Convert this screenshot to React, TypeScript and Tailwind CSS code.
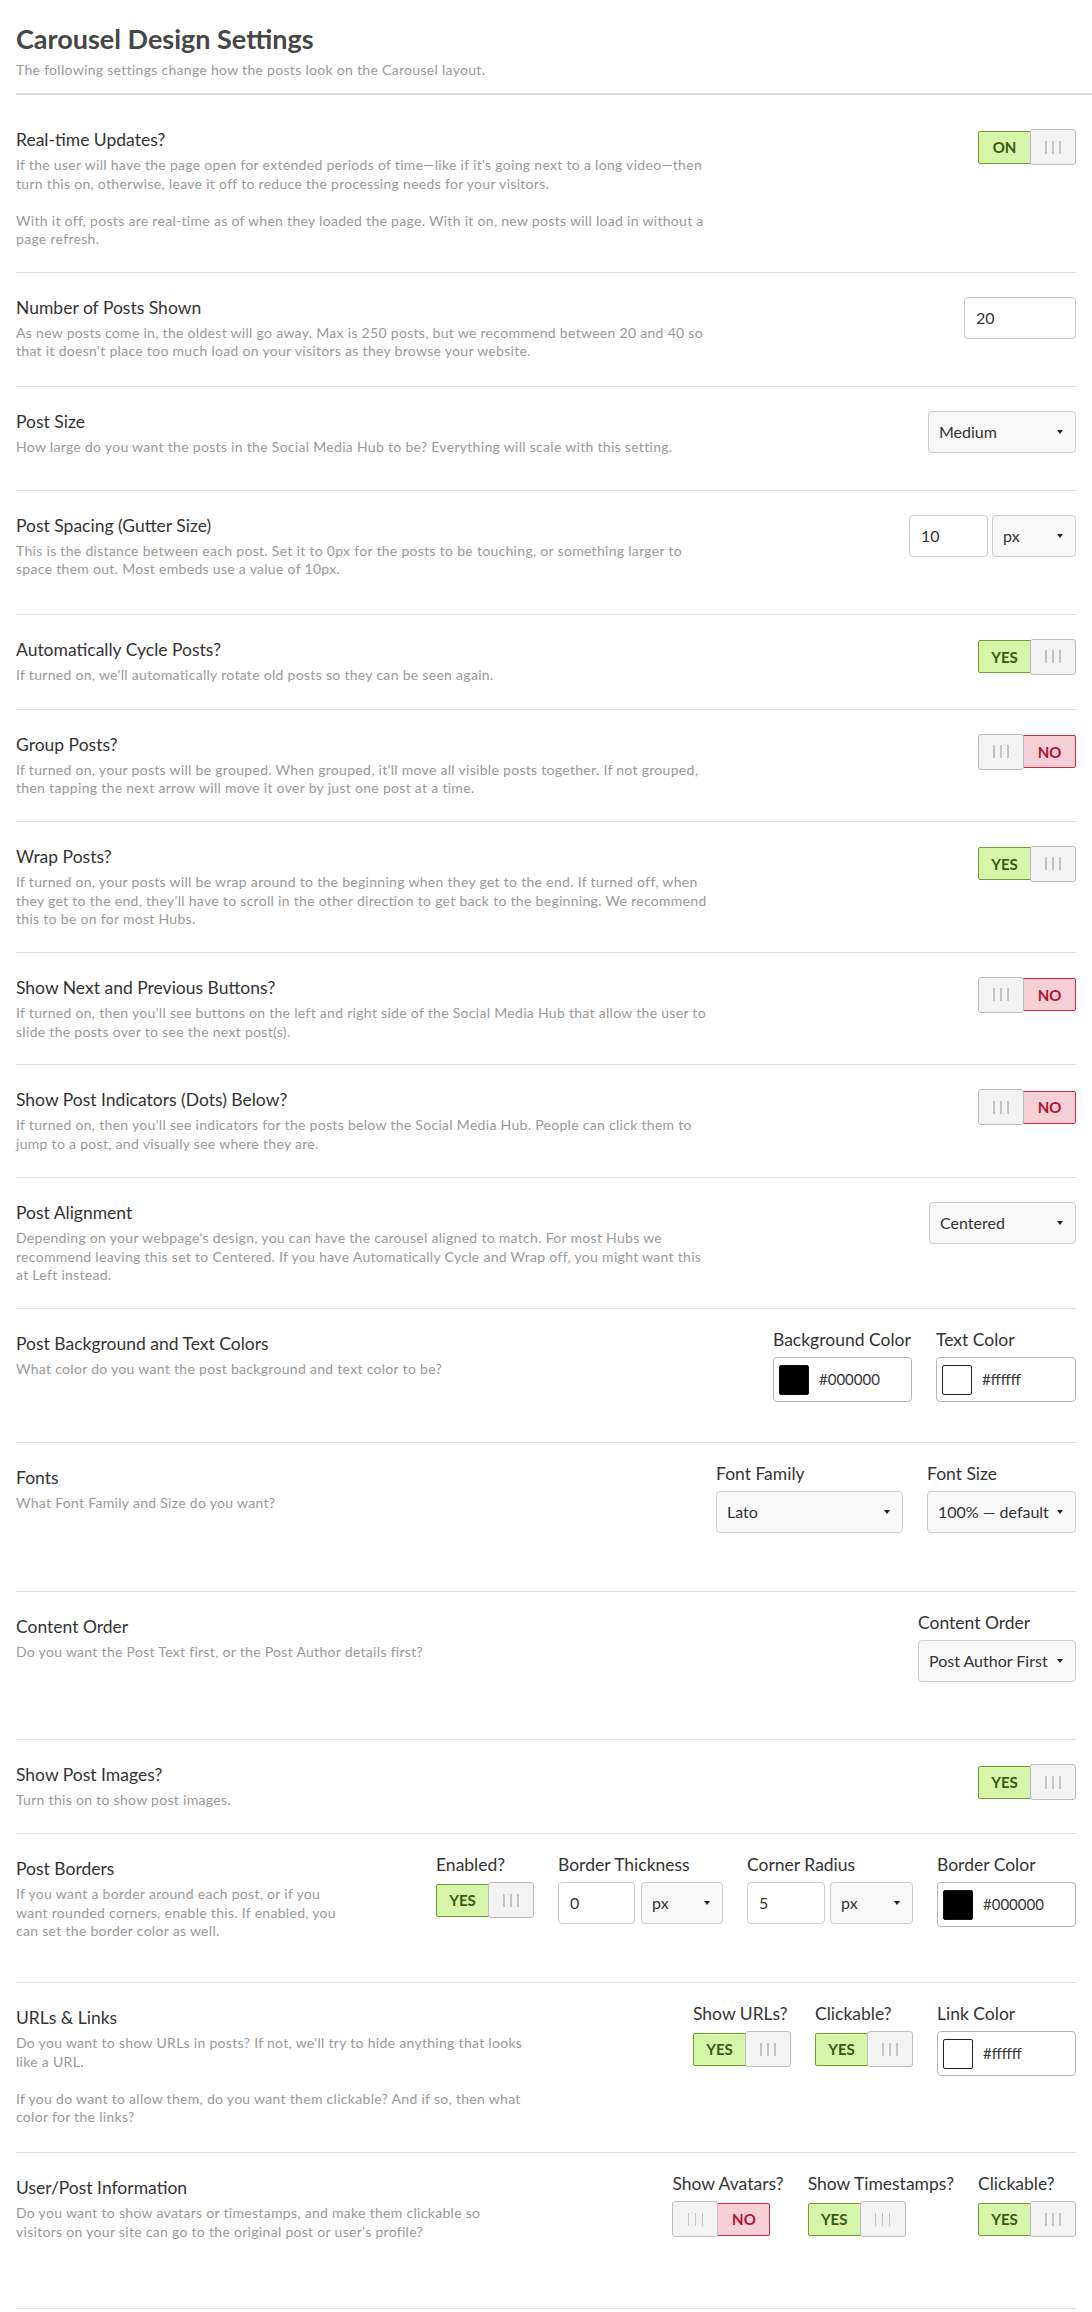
import React from "react";

function Handle() {
  return (
    <div className="relative z-10 flex h-[36px] w-[46px] items-center justify-center gap-[5.5px] rounded-[3px] border border-[#bdbdbd] bg-[#f3f3f3]">
      <span className="h-[13px] w-[1.5px] bg-[#c4c4c4]" />
      <span className="h-[13px] w-[1.5px] bg-[#c4c4c4]" />
      <span className="h-[13px] w-[1.5px] bg-[#c4c4c4]" />
    </div>
  );
}

function Toggle({ on, text }: { on: boolean; text: string }) {
  if (on) {
    return (
      <div className="flex w-[98px] items-center">
        <div className="flex h-[33px] w-[53px] items-center justify-center rounded-l-[2px] border border-[#6c9f2c] bg-[#d6f5a9] text-[15px] font-bold text-[#3a5912]">
          {text}
        </div>
        <div className="-ml-px">
          <Handle />
        </div>
      </div>
    );
  }
  return (
    <div className="flex w-[98px] items-center">
      <Handle />
      <div className="-ml-px flex h-[33px] w-[53px] items-center justify-center rounded-r-[2px] border border-[#d9253f] bg-[#f6d0d6] text-[15px] font-bold text-[#b3112f]">
        {text}
      </div>
    </div>
  );
}

function Caret() {
  return <span className="h-0 w-0 border-x-[3.5px] border-t-[4px] border-x-transparent border-t-[#222]" />;
}

function Select({ value, w }: { value: string; w: string }) {
  return (
    <div
      className={`${w} flex h-[42px] items-center justify-between rounded-[4px] border border-[#cccccc] bg-[#f8f8f8] pl-[10px] pr-[12px] text-[16px] text-[#333]`}
    >
      <span className="whitespace-nowrap">{value}</span>
      <Caret />
    </div>
  );
}

function TextInput({ value, w }: { value: string; w: string }) {
  return (
    <div
      className={`${w} flex h-[42px] items-center rounded-[4px] border border-[#cccccc] bg-white pl-[11px] text-[16px] text-[#333]`}
    >
      {value}
    </div>
  );
}

function ColorBox({ dark, value, w }: { dark: boolean; value: string; w: string }) {
  return (
    <div className={`${w} flex h-[45px] items-center gap-[10px] rounded-[4px] border border-[#b5b5b5] bg-white pl-[5px]`}>
      <span
        className={
          dark
            ? "h-[30px] w-[30px] rounded-[2px] border border-[#111] bg-black"
            : "h-[30px] w-[30px] rounded-[2px] border border-[#222] bg-white"
        }
      />
      <span className="text-[15px] text-[#333]">{value}</span>
    </div>
  );
}

function Field({ label, children }: { label: string; children: React.ReactNode }) {
  return (
    <div className="flex flex-col items-start">
      <div className="whitespace-nowrap text-[17.5px] leading-[22px] text-[#333]">{label}</div>
      <div className="mt-[6px]">{children}</div>
    </div>
  );
}

function Row({
  title,
  lines,
  right,
  pt = "pt-[24px]",
  minH = "",
  labeled = false,
}: {
  title: string;
  lines: string[];
  right: React.ReactNode;
  pt?: string;
  minH?: string;
  labeled?: boolean;
}) {
  return (
    <div className={`flex items-start border-b border-[#dddddd] pb-[23px] ${pt} ${minH}`}>
      <div className="min-w-0 flex-1">
        <div className="text-[17.5px] leading-[22px] text-[#333]">{title}</div>
        <div className="mt-[5px] whitespace-nowrap text-[14px] leading-[18.57px] tracking-[0.3px] text-[#999]">
          {lines.map((l, i) => (
            <div key={i}>{l === "" ? "\u00a0" : l}</div>
          ))}
        </div>
      </div>
      <div className={labeled ? "-mt-[4px] ml-auto flex items-start gap-[24px]" : "ml-auto flex items-start gap-[24px]"}>
        {right}
      </div>
    </div>
  );
}

export default function App() {
  return (
    <div className="min-h-screen bg-white pl-[16px] font-[Lato,sans-serif]">
      <div className="pt-[23px]">
        <h1 className="text-[27px] font-bold leading-[32px] text-[#464646]">Carousel Design Settings</h1>
        <p className="mt-[5px] text-[14px] leading-[20px] tracking-[0.3px] text-[#999]">
          The following settings change how the posts look on the Carousel layout.
        </p>
      </div>
      <div className="mt-[13px] h-[2px] bg-[#dddddd]" />
      <div className="pr-[16px]">
        <Row
          pt="pt-[34px]"
          title="Real-time Updates?"
          lines={[
            "If the user will have the page open for extended periods of time\u2014like if it's going next to a long video\u2014then",
            "turn this on, otherwise, leave it off to reduce the processing needs for your visitors.",
            "",
            "With it off, posts are real-time as of when they loaded the page. With it on, new posts will load in without a",
            "page refresh.",
          ]}
          right={<Toggle on text="ON" />}
        />
        <Row
          minH="min-h-[114px]"
          title="Number of Posts Shown"
          lines={[
            "As new posts come in, the oldest will go away. Max is 250 posts, but we recommend between 20 and 40 so",
            "that it doesn't place too much load on your visitors as they browse your website.",
          ]}
          right={<TextInput value="20" w="w-[112px]" />}
        />
        <Row
          minH="min-h-[104px]"
          title="Post Size"
          lines={["How large do you want the posts in the Social Media Hub to be? Everything will scale with this setting."]}
          right={<Select value="Medium" w="w-[148px]" />}
        />
        <Row
          minH="min-h-[124px]"
          title="Post Spacing (Gutter Size)"
          lines={[
            "This is the distance between each post. Set it to 0px for the posts to be touching, or something larger to",
            "space them out. Most embeds use a value of 10px.",
          ]}
          right={
            <div className="flex gap-[4px]">
              <TextInput value="10" w="w-[79px]" />
              <Select value="px" w="w-[84px]" />
            </div>
          }
        />
        <Row
          minH="min-h-[95px]"
          title="Automatically Cycle Posts?"
          lines={["If turned on, we'll automatically rotate old posts so they can be seen again."]}
          right={<Toggle on text="YES" />}
        />
        <Row
          minH="min-h-[112px]"
          title="Group Posts?"
          lines={[
            "If turned on, your posts will be grouped. When grouped, it'll move all visible posts together. If not grouped,",
            "then tapping the next arrow will move it over by just one post at a time.",
          ]}
          right={<Toggle on={false} text="NO" />}
        />
        <Row
          minH="min-h-[131px]"
          title="Wrap Posts?"
          lines={[
            "If turned on, your posts will be wrap around to the beginning when they get to the end. If turned off, when",
            "they get to the end, they'll have to scroll in the other direction to get back to the beginning. We recommend",
            "this to be on for most Hubs.",
          ]}
          right={<Toggle on text="YES" />}
        />
        <Row
          minH="min-h-[112px]"
          title="Show Next and Previous Buttons?"
          lines={[
            "If turned on, then you'll see buttons on the left and right side of the Social Media Hub that allow the user to",
            "slide the posts over to see the next post(s).",
          ]}
          right={<Toggle on={false} text="NO" />}
        />
        <Row
          minH="min-h-[113px]"
          title="Show Post Indicators (Dots) Below?"
          lines={[
            "If turned on, then you'll see indicators for the posts below the Social Media Hub. People can click them to",
            "jump to a post, and visually see where they are.",
          ]}
          right={<Toggle on={false} text="NO" />}
        />
        <Row
          minH="min-h-[131px]"
          title="Post Alignment"
          lines={[
            "Depending on your webpage's design, you can have the carousel aligned to match. For most Hubs we",
            "recommend leaving this set to Centered. If you have Automatically Cycle and Wrap off, you might want this",
            "at Left instead.",
          ]}
          right={<Select value="Centered" w="w-[147px]" />}
        />
        <Row
          minH="min-h-[134px]"
          labeled
          title="Post Background and Text Colors"
          lines={["What color do you want the post background and text color to be?"]}
          right={
            <>
              <Field label="Background Color">
                <ColorBox dark value="#000000" w="w-[139px]" />
              </Field>
              <Field label="Text Color">
                <ColorBox dark={false} value="#ffffff" w="w-[140px]" />
              </Field>
            </>
          }
        />
        <Row
          minH="min-h-[149px]"
          labeled
          title="Fonts"
          lines={["What Font Family and Size do you want?"]}
          right={
            <>
              <Field label="Font Family">
                <Select value="Lato" w="w-[187px]" />
              </Field>
              <Field label="Font Size">
                <Select value={"100% \u2014 default"} w="w-[149px]" />
              </Field>
            </>
          }
        />
        <Row
          minH="min-h-[148px]"
          labeled
          title="Content Order"
          lines={["Do you want the Post Text first, or the Post Author details first?"]}
          right={
            <Field label="Content Order">
              <Select value="Post Author First" w="w-[158px]" />
            </Field>
          }
        />
        <Row
          minH="min-h-[94px]"
          title="Show Post Images?"
          lines={["Turn this on to show post images."]}
          right={<Toggle on text="YES" />}
        />
        <Row
          minH="min-h-[149px]"
          labeled
          title="Post Borders"
          lines={[
            "If you want a border around each post, or if you",
            "want rounded corners, enable this. If enabled, you",
            "can set the border color as well.",
          ]}
          right={
            <>
              <Field label="Enabled?">
                <Toggle on text="YES" />
              </Field>
              <Field label="Border Thickness">
                <div className="flex gap-[6px]">
                  <TextInput value="0" w="w-[77px]" />
                  <Select value="px" w="w-[82px]" />
                </div>
              </Field>
              <Field label="Corner Radius">
                <div className="flex gap-[5px]">
                  <TextInput value="5" w="w-[78px]" />
                  <Select value="px" w="w-[83px]" />
                </div>
              </Field>
              <Field label="Border Color">
                <ColorBox dark value="#000000" w="w-[139px]" />
              </Field>
            </>
          }
        />
        <Row
          minH="min-h-[170px]"
          labeled
          title="URLs & Links"
          lines={[
            "Do you want to show URLs in posts? If not, we'll try to hide anything that looks",
            "like a URL.",
            "",
            "If you do want to allow them, do you want them clickable? And if so, then what",
            "color for the links?",
          ]}
          right={
            <>
              <Field label="Show URLs?">
                <Toggle on text="YES" />
              </Field>
              <Field label="Clickable?">
                <Toggle on text="YES" />
              </Field>
              <Field label="Link Color">
                <ColorBox dark={false} value="#ffffff" w="w-[139px]" />
              </Field>
            </>
          }
        />
        <Row
          minH="min-h-[156px]"
          labeled
          title="User/Post Information"
          lines={[
            "Do you want to show avatars or timestamps, and make them clickable so",
            "visitors on your site can go to the original post or user's profile?",
          ]}
          right={
            <>
              <Field label="Show Avatars?">
                <Toggle on={false} text="NO" />
              </Field>
              <Field label="Show Timestamps?">
                <Toggle on text="YES" />
              </Field>
              <Field label="Clickable?">
                <Toggle on text="YES" />
              </Field>
            </>
          }
        />
      </div>
    </div>
  );
}
